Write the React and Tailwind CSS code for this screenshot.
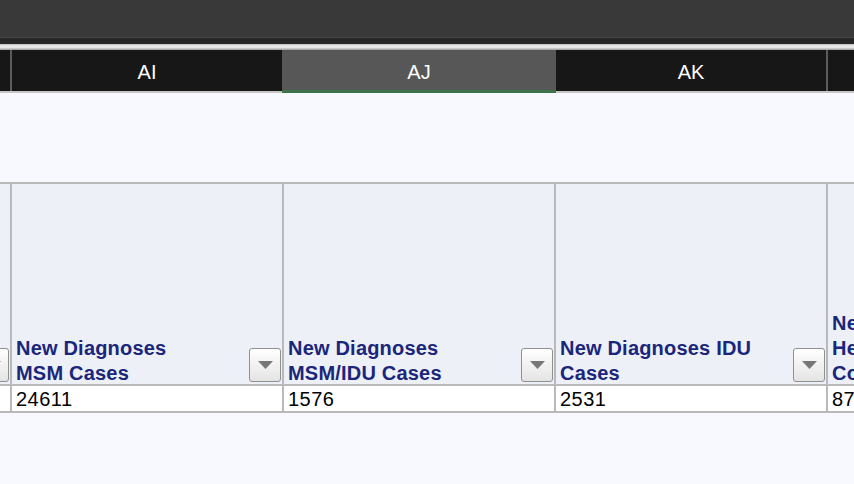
import React from "react";

function DropBtn() {
  return (
    <div className="w-[32px] h-[34px] shrink-0 mr-[1px] mb-[2px] rounded-[3px] border border-[#8f8f8f] bg-gradient-to-b from-[#ffffff] to-[#e4e4e4] flex items-center justify-center">
      <svg width="15" height="8" viewBox="0 0 15 8">
        <polygon points="0,0 15,0 7.5,8" fill="#777777" />
      </svg>
    </div>
  );
}

function HeadCell({ lines, w }) {
  return (
    <div className={`${w} h-full bg-[#edf0f7] flex items-end overflow-hidden`}>
      <div className="flex-1 min-w-0 pl-[4px] mb-[-2px] text-[20px] leading-[25px] font-bold tracking-[0.2px] text-[#1a267c] whitespace-nowrap">
        {lines.map((l, i) => (
          <div key={i}>{l}</div>
        ))}
      </div>
      <DropBtn />
    </div>
  );
}

function DataCell({ v, w }) {
  return (
    <div className={`${w} h-full bg-white pl-[4px] pt-[2px] text-[20px] leading-[23px] tracking-[0.5px] text-black whitespace-nowrap overflow-hidden`}>
      {v}
    </div>
  );
}

const B = () => <div className="w-[2px] h-full bg-[#b9b9b9] shrink-0" />;

export default function App() {
  return (
    <div className="w-[854px] h-[484px] overflow-hidden bg-[#f7f9fe] font-['Liberation_Sans',Arial,sans-serif]">
      <div className="h-[37px] bg-[#393939]" />
      <div className="h-[1px] bg-[#464646]" />
      <div className="h-[6px] bg-[#262626]" />
      <div className="h-[6px] bg-gradient-to-b from-[#c4c4c4] via-[#f4f4f4] to-[#9c9c9c]" />
      <div className="flex h-[43px] text-white text-[20px]">
        <div className="w-[10px] bg-[#171717] border-b-2 border-[#c6c6c6]" />
        <div className="w-[2px] bg-[#5c5c5c] border-b-2 border-[#c6c6c6]" />
        <div className="w-[270px] bg-[#171717] border-b-2 border-[#c6c6c6] flex items-center justify-center pt-[2px]">AI</div>
        <div className="w-[274px] bg-[#575757] border-b-[3px] border-[#3b7549] flex items-center justify-center pt-[3px]">AJ</div>
        <div className="w-[270px] bg-[#171717] border-b-2 border-[#c6c6c6] flex items-center justify-center pt-[2px]">AK</div>
        <div className="w-[2px] bg-[#5c5c5c] border-b-2 border-[#c6c6c6]" />
        <div className="flex-1 bg-[#171717] border-b-2 border-[#c6c6c6]" />
      </div>
      <div className="h-[89px]" />
      <div className="h-[2px] bg-[#b9b9b9]" />
      <div className="flex h-[200px]">
        <div className="w-[10px] h-full bg-[#edf0f7] flex items-end justify-end overflow-hidden">
          <DropBtn />
        </div>
        <B />
        <HeadCell w="w-[270px]" lines={["New Diagnoses", "MSM Cases"]} />
        <B />
        <HeadCell w="w-[270px]" lines={["New Diagnoses", "MSM/IDU Cases"]} />
        <B />
        <HeadCell w="w-[270px]" lines={["New Diagnoses IDU", "Cases"]} />
        <B />
        <div className="flex-1 h-full bg-[#edf0f7] flex items-end overflow-hidden">
          <div className="pl-[4px] mb-[-2px] text-[20px] leading-[25px] font-bold tracking-[0.2px] text-[#1a267c] whitespace-nowrap">
            <div>New Diagnoses</div>
            <div>Heterosexual</div>
            <div>Contact Cases</div>
          </div>
        </div>
      </div>
      <div className="h-[2px] bg-[#b9b9b9]" />
      <div className="flex h-[25px]">
        <div className="w-[10px] h-full bg-white" />
        <B />
        <DataCell w="w-[270px]" v="24611" />
        <B />
        <DataCell w="w-[270px]" v="1576" />
        <B />
        <DataCell w="w-[270px]" v="2531" />
        <B />
        <div className="flex-1 min-w-0">
          <DataCell w="w-full" v="8741" />
        </div>
      </div>
      <div className="h-[2px] bg-[#b9b9b9]" />
    </div>
  );
}
